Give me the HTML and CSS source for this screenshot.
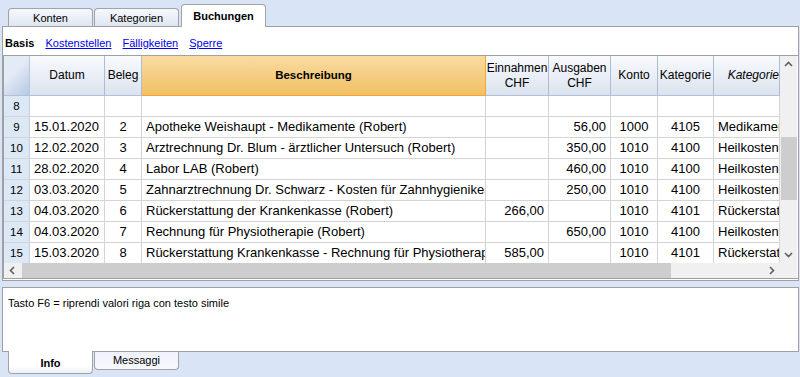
FILE: index.html
```html
<!DOCTYPE html>
<html lang="de">

<head>
    <meta charset="UTF-8">
    <title>Buchungen</title>
    <link rel="stylesheet" href="styles.css">
</head>

<body>
    <div class="tabs top-tabs">
        <div class="tab">Konten</div>
        <div class="tab">Kategorien</div>
        <div class="tab active">Buchungen</div>
    </div>

    <div class="panel main-panel">
        <div class="views">
            <b>Basis</b>
            <a href="#">Kostenstellen</a>
            <a href="#">Fälligkeiten</a>
            <a href="#">Sperre</a>
        </div>

        <div class="grid">
            <div class="grid-body">
                <div class="row head">
                    <div class="c corner"></div>
                    <div class="c">Datum</div>
                    <div class="c">Beleg</div>
                    <div class="c sel">Beschreibung</div>
                    <div class="c">Einnahmen<br>CHF</div>
                    <div class="c">Ausgaben<br>CHF</div>
                    <div class="c">Konto</div>
                    <div class="c">Kategorie</div>
                    <div class="c it">Kategorie</div>
                </div>
                <div class="row">
                    <div class="c num">8</div>
                    <div class="c"></div><div class="c"></div><div class="c"></div><div class="c"></div>
                    <div class="c"></div><div class="c"></div><div class="c"></div><div class="c"></div>
                </div>
                <div class="row">
                    <div class="c num">9</div>
                    <div class="c">15.01.2020</div>
                    <div class="c mid">2</div>
                    <div class="c">Apotheke Weishaupt - Medikamente (Robert)</div>
                    <div class="c amt"></div>
                    <div class="c amt">56,00</div>
                    <div class="c mid">1000</div>
                    <div class="c mid">4105</div>
                    <div class="c">Medikamente</div>
                </div>
                <div class="row">
                    <div class="c num">10</div>
                    <div class="c">12.02.2020</div>
                    <div class="c mid">3</div>
                    <div class="c">Arztrechnung Dr. Blum - ärztlicher Untersuch (Robert)</div>
                    <div class="c amt"></div>
                    <div class="c amt">350,00</div>
                    <div class="c mid">1010</div>
                    <div class="c mid">4100</div>
                    <div class="c">Heilkosten</div>
                </div>
                <div class="row">
                    <div class="c num">11</div>
                    <div class="c">28.02.2020</div>
                    <div class="c mid">4</div>
                    <div class="c">Labor LAB (Robert)</div>
                    <div class="c amt"></div>
                    <div class="c amt">460,00</div>
                    <div class="c mid">1010</div>
                    <div class="c mid">4100</div>
                    <div class="c">Heilkosten</div>
                </div>
                <div class="row">
                    <div class="c num">12</div>
                    <div class="c">03.03.2020</div>
                    <div class="c mid">5</div>
                    <div class="c">Zahnarztrechnung Dr. Schwarz - Kosten für Zahnhygieniker</div>
                    <div class="c amt"></div>
                    <div class="c amt">250,00</div>
                    <div class="c mid">1010</div>
                    <div class="c mid">4100</div>
                    <div class="c">Heilkosten</div>
                </div>
                <div class="row">
                    <div class="c num">13</div>
                    <div class="c">04.03.2020</div>
                    <div class="c mid">6</div>
                    <div class="c">Rückerstattung der Krankenkasse (Robert)</div>
                    <div class="c amt">266,00</div>
                    <div class="c amt"></div>
                    <div class="c mid">1010</div>
                    <div class="c mid">4101</div>
                    <div class="c">Rückerstattung</div>
                </div>
                <div class="row">
                    <div class="c num">14</div>
                    <div class="c">04.03.2020</div>
                    <div class="c mid">7</div>
                    <div class="c">Rechnung für Physiotherapie (Robert)</div>
                    <div class="c amt"></div>
                    <div class="c amt">650,00</div>
                    <div class="c mid">1010</div>
                    <div class="c mid">4100</div>
                    <div class="c">Heilkosten</div>
                </div>
                <div class="row">
                    <div class="c num">15</div>
                    <div class="c">15.03.2020</div>
                    <div class="c mid">8</div>
                    <div class="c">Rückerstattung Krankenkasse - Rechnung für Physiotherapie</div>
                    <div class="c amt">585,00</div>
                    <div class="c amt"></div>
                    <div class="c mid">1010</div>
                    <div class="c mid">4101</div>
                    <div class="c">Rückerstattung</div>
                </div>
            </div>

            <div class="vscroll">
                <svg class="arrow" width="17" height="17" viewBox="0 0 17 17"><polyline points="5,10 8.5,6.5 12,10" fill="none" stroke="#606060" stroke-width="1.6"/></svg>
                <div class="vtrack"><div class="vthumb"></div></div>
                <svg class="arrow" width="17" height="17" viewBox="0 0 17 17"><polyline points="5,7 8.5,10.5 12,7" fill="none" stroke="#606060" stroke-width="1.6"/></svg>
            </div>

            <div class="hscroll">
                <svg class="arrow" width="16" height="15" viewBox="0 0 16 15"><polyline points="10,4 6.5,7.5 10,11" fill="none" stroke="#606060" stroke-width="1.6"/></svg>
                <div class="hthumb"></div>
                <div class="htrack"></div>
                <svg class="arrow" width="16" height="15" viewBox="0 0 16 15"><polyline points="6,4 9.5,7.5 6,11" fill="none" stroke="#606060" stroke-width="1.6"/></svg>
            </div>
            <div class="scroll-corner"></div>
        </div>
    </div>

    <div class="panel info-panel">
        Tasto F6 = riprendi valori riga con testo simile
    </div>

    <div class="tabs bottom-tabs">
        <div class="tab active">Info</div>
        <div class="tab">Messaggi</div>
    </div>
</body>

</html>
```

FILE: styles.css
```css
body {
    margin: 0;
    width: 800px;
    height: 377px;
    background: #dae4f7;
    font-family: "Liberation Sans", Arial, sans-serif;
    color: #000;
    overflow: hidden;
}

/* tab strips */
.tabs {
    display: flex;
    padding-left: 8px;
    font-size: 11px;
}

.top-tabs {
    height: 26px;
    align-items: flex-end;
    position: relative;
    z-index: 2;
}

.tab {
    box-sizing: border-box;
    width: 85px;
    height: 18px;
    margin-right: 1px;
    border: 1px solid #a3a3a3;
    border-bottom: none;
    border-radius: 4px 4px 0 0;
    background: linear-gradient(#f6f8fc, #dfe6f3);
    text-align: center;
    line-height: 18px;
}

.top-tabs .tab.active {
    height: 23px;
    margin-left: 1px;
    margin-bottom: -1px;
    background: #fff;
    font-weight: bold;
    line-height: 22px;
}

.bottom-tabs {
    align-items: flex-start;
}

.bottom-tabs .tab {
    border-top: none;
    border-bottom: 1px solid #a3a3a3;
    border-radius: 0 0 4px 4px;
    background: linear-gradient(#eef2fa, #f6f8fc);
    line-height: 17px;
}

.bottom-tabs .tab.active {
    height: 23px;
    margin-top: -1px;
    background: linear-gradient(#fff 70%, #eaeef6);
    font-weight: bold;
    line-height: 24px;
    position: relative;
}

/* panels */
.panel {
    box-sizing: border-box;
    margin: 0 1px 0 2px;
    border: 1px solid #a0a0a0;
    background: #fff;
}

.main-panel {
    height: 255px;
}

.info-panel {
    margin-top: 6px;
    height: 65px;
    padding: 9px 0 0 5px;
    font-size: 11px;
}

.views {
    height: 28px;
    padding: 9px 0 0 2px;
    box-sizing: border-box;
    font-size: 11px;
    line-height: 14px;
}

.views a {
    color: #0000ee;
    margin-left: 8px;
}

/* grid */
.grid {
    display: grid;
    grid-template-columns: 776px 17px;
    grid-template-rows: 207px 15px;
    border: 1px solid #a0a0a0;
    border-right: none;
    height: 224px;
    box-sizing: border-box;
}

.grid-body {
    overflow: hidden;
}

.row {
    display: grid;
    grid-template-columns: 26px 75px 37px 344px 63px 62px 47px 56px 66px;
    height: 21px;
    font-size: 13px;
    line-height: 20px;
}

.c {
    box-sizing: border-box;
    border-right: 1px solid #d4d4d4;
    border-bottom: 1px solid #d4d4d4;
    padding: 0 4px;
    white-space: nowrap;
    overflow: hidden;
}

.c.mid {
    text-align: center;
}

.c.amt {
    text-align: right;
}

.c.num {
    background: #dde8f7;
    border-right-color: #c3d0e2;
    font-size: 11.5px;
    text-align: center;
    padding: 0;
}

.row.head {
    height: 40px;
    font-size: 12px;
    line-height: 15px;
}

.head .c {
    display: flex;
    align-items: center;
    justify-content: center;
    text-align: center;
    padding: 0 1px;
    background: linear-gradient(#f8fafd, #dce3ee);
    border-right-color: #aabdd6;
    border-bottom-color: #b0c2da;
}

.head .c.corner {
    background: linear-gradient(135deg, #e3ebf7 40%, #b5c8e2);
    border-right-color: #b8c8de;
}

.head .c.sel {
    background: linear-gradient(#f9dba3, #f1c062);
    border-right-color: #f3a53c;
    border-bottom-color: #f3a53c;
    font-weight: bold;
    font-size: 11.5px;
}

.head .c.it {
    font-style: italic;
    justify-content: flex-end;
    padding-right: 0;
}

/* scrollbars */
.vscroll {
    display: flex;
    flex-direction: column;
    background: #f0f0f0;
}

.vtrack {
    flex: 1;
    position: relative;
}

.vthumb {
    position: absolute;
    left: 1px;
    right: 0;
    top: 64px;
    height: 63px;
    background: #cdcdcd;
}

.hscroll {
    display: flex;
    background: #f0f0f0;
}

.hthumb {
    width: 649px;
    margin-left: 2px;
    background: #cdcdcd;
}

.htrack {
    flex: 1;
}

.arrow {
    display: block;
    flex: none;
}

.scroll-corner {
    background: #f0f0f0;
}
```
